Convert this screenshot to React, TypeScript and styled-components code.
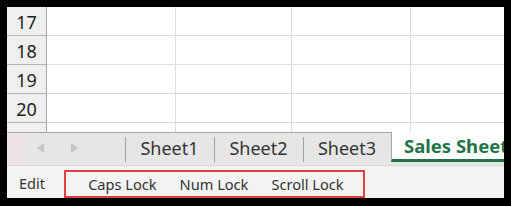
import React from "react"
import styled, { createGlobalStyle } from "styled-components"

const GlobalStyle = createGlobalStyle`
  html, body {
    margin: 0;
    padding: 0;
    background: #000;
  }
  * {
    box-sizing: border-box;
  }
`

const Frame = styled.div`
  width: 511px;
  height: 206px;
  padding: 7px 7px 8px 7px;
  background: #000;
`

const Window = styled.div`
  height: 100%;
  display: flex;
  flex-direction: column;
  background: #fff;
  overflow: hidden;
  font-family: "Noto Sans", "Open Sans", sans-serif;
`

const Grid = styled.div`
  height: 125px;
  overflow: hidden;
  flex-shrink: 0;
`

const GridInner = styled.div`
  margin-top: -1px;
`

const Row = styled.div`
  display: grid;
  grid-template-columns: 40px 129px 116px 119px 1fr;
  height: 29px;
`

const RowHeader = styled.div`
  background: #efefef;
  border-right: 1px solid #a8a8a8;
  border-top: 1px solid #b4b4b4;
  display: flex;
  align-items: center;
  justify-content: center;
  font-size: 18px;
  color: #1f1f1f;
  padding-top: 1px;
`

const Cell = styled.div<{ $last?: boolean }>`
  border-top: 1px solid #dcdcdc;
  border-right: ${p => (p.$last ? "none" : "1px solid #dcdcdc")};
`

const TabBar = styled.div`
  height: 34px;
  display: flex;
  background: #e6e6e6;
  border-bottom: 1px solid #d8d8d8;
  flex-shrink: 0;
`

const LeftStrip = styled.div`
  width: 16px;
  background: #ede2e5;
  border-top: 1px solid #a6a6a6;
`

const Nav = styled.div`
  width: 102px;
  display: flex;
  align-items: center;
  gap: 27px;
  padding-left: 14px;
  padding-bottom: 2px;
  border-top: 1px solid #a6a6a6;
`

const Arrow = styled.span<{ $dir: "left" | "right" }>`
  width: 0;
  height: 0;
  border-top: 5px solid transparent;
  border-bottom: 5px solid transparent;
  ${p =>
    p.$dir === "left"
      ? "border-right: 7px solid #c4c4c4;"
      : "border-left: 7px solid #c4c4c4;"}
`

const Tab = styled.div<{ $width: number }>`
  width: ${p => p.$width}px;
  display: flex;
  align-items: center;
  justify-content: center;
  border-top: 1px solid #a6a6a6;
  position: relative;
  font-size: 18px;
  color: #333;
  padding-bottom: 3px;
  &::before {
    content: "";
    position: absolute;
    left: 0;
    top: 4px;
    bottom: 3px;
    width: 1px;
    background: #a0a0a0;
  }
`

const ActiveTab = styled.div`
  flex: 1;
  background: #fff;
  border-left: 1px solid #a6a6a6;
  border-bottom: 3px solid #217346;
  margin-bottom: 3px;
  display: flex;
  align-items: center;
  padding-left: 12px;
  font-size: 18.5px;
  font-weight: 700;
  color: #217346;
  white-space: nowrap;
  overflow: hidden;
`

const StatusBar = styled.div`
  flex: 1;
  background: #f3f3f3;
  display: flex;
  align-items: flex-end;
  padding-left: 12px;
  font-size: 14.6px;
  color: #333;
`

const StatusItem = styled.span`
  line-height: 28px;
  padding-bottom: 1px;
`

const LockBox = styled.div`
  margin-left: 19px;
  width: 301px;
  height: 28px;
  border: 2px solid #e0403f;
  display: flex;
  align-items: center;
  gap: 23px;
  padding-left: 22px;
`

const rows = [17, 18, 19, 20, 21]
const sheets = [
  { name: "Sheet1", width: 89 },
  { name: "Sheet2", width: 89 },
  { name: "Sheet3", width: 88 },
]

export default function App() {
  return (
    <>
      <GlobalStyle />
      <Frame>
        <Window>
          <Grid>
            <GridInner>
              {rows.map(r => (
                <Row key={r}>
                  <RowHeader>{r}</RowHeader>
                  <Cell />
                  <Cell />
                  <Cell />
                  <Cell $last />
                </Row>
              ))}
            </GridInner>
          </Grid>
          <TabBar>
            <LeftStrip />
            <Nav>
              <Arrow $dir="left" />
              <Arrow $dir="right" />
            </Nav>
            {sheets.map(s => (
              <Tab key={s.name} $width={s.width}>
                {s.name}
              </Tab>
            ))}
            <ActiveTab>Sales Sheet</ActiveTab>
          </TabBar>
          <StatusBar>
            <StatusItem>Edit</StatusItem>
            <LockBox>
              <span>Caps Lock</span>
              <span>Num Lock</span>
              <span>Scroll Lock</span>
            </LockBox>
          </StatusBar>
        </Window>
      </Frame>
    </>
  )
}
